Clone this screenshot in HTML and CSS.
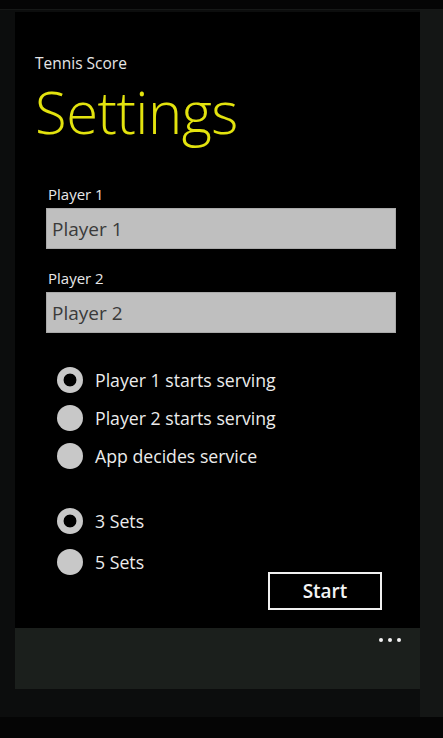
FILE: index.html
```html
<!DOCTYPE html>
<html lang="en">
<head>
    <meta charset="UTF-8">
    <meta name="viewport" content="width=device-width, initial-scale=1.0">
    <title>Tennis Score - Settings</title>
    <link rel="stylesheet" href="styles.css">
</head>
<body>
    <div class="frame">
        <div class="screen">
            <div class="app-title">Tennis Score</div>
            <h1 class="page-title">Settings</h1>

            <form id="settingsForm">
                <div class="form-group">
                    <label for="player1">Player 1</label>
                    <input type="text" id="player1" class="text-box" value="Player 1">
                </div>

                <div class="form-group">
                    <label for="player2">Player 2</label>
                    <input type="text" id="player2" class="text-box" value="Player 2">
                </div>

                <div class="radio-list serve">
                    <label class="radio-row"><input type="radio" name="serve" value="p1" checked> Player 1 starts serving</label>
                    <label class="radio-row"><input type="radio" name="serve" value="p2"> Player 2 starts serving</label>
                    <label class="radio-row"><input type="radio" name="serve" value="app"> App decides service</label>
                </div>

                <div class="radio-list sets">
                    <label class="radio-row"><input type="radio" name="sets" value="3" checked> 3 Sets</label>
                    <label class="radio-row"><input type="radio" name="sets" value="5"> 5 Sets</label>
                </div>

                <div class="actions">
                    <button type="submit">Start</button>
                </div>
            </form>
        </div>
        <div class="app-bar">
            <div class="more"><span></span><span></span><span></span></div>
        </div>
    </div>
</body>
</html>
```

FILE: styles.css
```css
body {
    margin: 0;
    background-color: #050505;
    font-family: "Open Sans", "Noto Sans", sans-serif;
    color: #e8e8e8;
}
.frame {
    margin-top: 9px;
    height: 708px;
    padding-top: 2px;
    padding-left: 15px;
    box-sizing: border-box;
    width: 443px;
    background: linear-gradient(to right, #0c0d0d 0, #0c0d0d 420px, #141615 420px);
    border-top: 1px solid #161817;
}
.screen {
    width: 405px;
    height: 616px;
    background-color: #000;
    padding: 41px 20px 0 20px;
    box-sizing: border-box;
}
.app-title {
    font-size: 15.5px;
    line-height: 20px;
    margin-bottom: 7px;
    color: #e6e6e6;
}
.page-title {
    margin: 0;
    font-size: 58px;
    font-weight: 300;
    line-height: 64px;
    color: #e3e30e;
    letter-spacing: -0.5px;
}
#settingsForm {
    padding: 40px 0 0 11px;
}
.form-group {
    margin-bottom: 19px;
}
.form-group label {
    display: block;
    font-size: 15px;
    line-height: 20px;
    color: #e8e8e8;
    padding-left: 2px;
    margin-bottom: 4px;
}
.text-box {
    display: block;
    width: 350px;
    height: 41px;
    box-sizing: border-box;
    margin: 0;
    padding: 0 5px;
    background-color: #bfbfbf;
    border: 1px solid #a9a9a9;
    font-family: inherit;
    font-size: 19px;
    color: #3a3a3a;
    outline: none;
}
.radio-list {
    display: flex;
    flex-direction: column;
    padding-left: 11px;
}
.radio-list.serve {
    margin-top: 34px;
    gap: 12px;
}
.radio-list.sets {
    margin-top: 39px;
    gap: 15px;
}
.radio-row {
    display: flex;
    align-items: center;
    gap: 12px;
    font-size: 17.7px;
    line-height: 26px;
    color: #ececec;
}
.radio-row input {
    appearance: none;
    -webkit-appearance: none;
    margin: 0;
    width: 26px;
    height: 26px;
    border-radius: 50%;
    background-color: #c8c8c8;
    flex-shrink: 0;
}
.radio-row input:checked {
    background: radial-gradient(circle, #000 0, #000 6px, #c8c8c8 6.8px);
}
.actions {
    display: flex;
    justify-content: flex-end;
    margin-top: -3px;
    padding-right: 18px;
}
button {
    width: 114px;
    height: 38px;
    background-color: #000;
    border: 2px solid #f0f0f0;
    color: #f4f4f4;
    font-family: inherit;
    font-size: 19px;
    font-weight: 600;
    cursor: pointer;
}
.app-bar {
    width: 405px;
    height: 61px;
    background-color: #1b1f1c;
    display: flex;
    justify-content: flex-end;
}
.more {
    display: flex;
    gap: 5px;
    padding: 10px 19px 0 0;
}
.more span {
    width: 4px;
    height: 4px;
    border-radius: 50%;
    background-color: #f2f2f2;
}
```
